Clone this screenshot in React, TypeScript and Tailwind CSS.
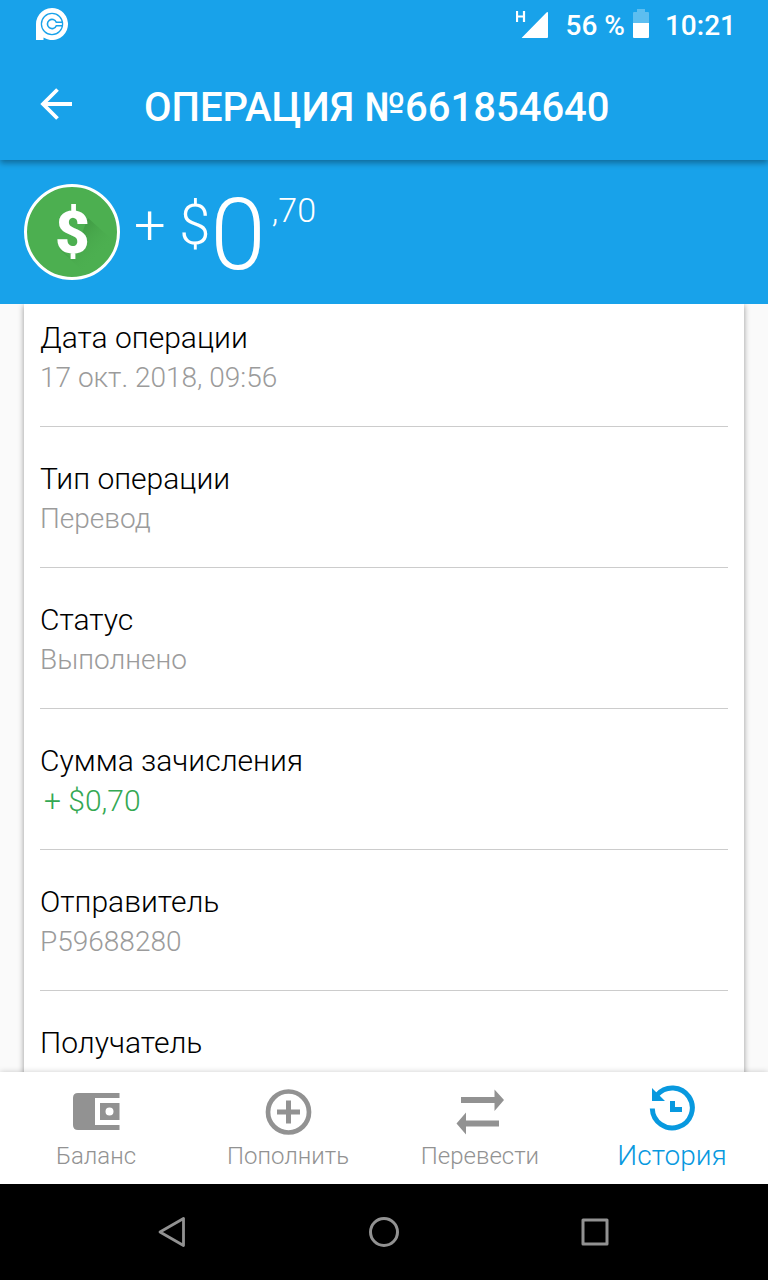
import type { ReactNode } from "react";

type Operation = { label: string; value: string; income?: boolean };

const details: Operation[] = [
  { label: "Дата операции", value: "17 окт. 2018, 09:56" },
  { label: "Тип операции", value: "Перевод" },
  { label: "Статус", value: "Выполнено" },
  { label: "Сумма зачисления", value: "+ $0,70", income: true },
  { label: "Отправитель", value: "P59688280" },
  { label: "Получатель", value: "P11998181" },
];

function StatusBar() {
  return (
    <div className="flex h-12 items-center justify-between pl-9 pr-8">
      <svg className="h-8 w-8" viewBox="0 0 32 32" fill="none" role="img" aria-label="Payeer">
        <path d="M0 32V16A16 16 0 1 1 7.5 29.6V32Z" fill="#fff" />
        <circle cx="16" cy="16" r="10.6" stroke="#18a2ea" strokeWidth="1.3" />
        <path d="M26.5 14.3H20.3A4.6 4.6 0 1 0 20.3 17.7H26.5" stroke="#18a2ea" strokeWidth="1.6" />
      </svg>
      <div className="flex items-center text-[28px] font-medium leading-8">
        <svg className="mr-[18px] h-8 w-8" viewBox="0 0 32 32" aria-hidden="true">
          <path d="M1 3v11M8 3v11M1 8.5h7" stroke="#fff" strokeWidth="2.2" fill="none" />
          <path d="M6 29.500 30.500 4.500Q32 3.500 32 5V29Q32 30 31 30H7Q5 30 6 29.500Z" fill="#fff" />
        </svg>
        <span className="pt-1">56 %</span>
        <svg className="mx-2 h-8 w-4" viewBox="0 0 16 32" aria-hidden="true">
          <path d="M4 1h8v3h3q1 0 1 1v10H0V5q0-1 1-1h3Z" fill="#fff" opacity=".3" />
          <path d="M0 15h16v14q0 1-1 1H1q-1 0-1-1Z" fill="#fff" />
        </svg>
        <span className="pl-2 pt-1">10:21</span>
      </div>
    </div>
  );
}

function DollarBadge() {
  return (
    <svg className="h-24 w-24 shrink-0" viewBox="0 0 96 96" aria-hidden="true">
      <defs>
        <linearGradient id="cast" x1="48" y1="48" x2="74" y2="74" gradientUnits="userSpaceOnUse">
          <stop offset="0" stopColor="#2f7d32" stopOpacity=".45" />
          <stop offset="1" stopColor="#4caf50" stopOpacity="0" />
        </linearGradient>
      </defs>
      <circle cx="48" cy="48" r="46.500" fill="#4caf50" stroke="#fff" strokeWidth="3" />
      <path d="M64 34 93 60A46 46 0 0 1 63 91L34 64 48 74Z" fill="url(#cast)" />
      <text x="48.500" y="69" textAnchor="middle" fontSize="60" fill="#fff" className="font-black">
        $
      </text>
    </svg>
  );
}

function Tab({ label, active, children }: { label: string; active?: boolean; children: ReactNode }) {
  return (
    <a
      href="#"
      aria-current={active ? "page" : undefined}
      className={
        active
          ? "flex flex-1 flex-col items-center pt-3 text-[28px] leading-9 text-[#0899df]"
          : "flex flex-1 flex-col items-center pt-4 text-2xl leading-9 text-[#929292]"
      }
    >
      <svg className="h-12 w-12" viewBox="0 0 48 48" fill="currentColor" aria-hidden="true">
        {children}
      </svg>
      <span className={active ? "pt-1.5" : "pt-0.5"}>{label}</span>
    </a>
  );
}

export default function App() {
  return (
    <div className="flex h-screen flex-col bg-[#fafafa] font-['Roboto',sans-serif] font-light">
      <header className="relative z-20 bg-[#18a2ea] text-white shadow-[0_3px_6px_rgba(0,0,0,0.35)]">
        <StatusBar />
        <div className="flex h-28 items-center gap-[72px] pl-10">
          <button type="button" aria-label="Назад">
            <svg className="h-8 w-8" viewBox="0 0 32 32" fill="none" stroke="#fff" strokeWidth="3.800">
              <path d="M17.500 1.500 3 16 17.500 30.500M3 16H32" />
            </svg>
          </button>
          <h1 className="pt-2 text-[40px] font-medium leading-[48px]">ОПЕРАЦИЯ №661854640</h1>
        </div>
      </header>

      <section className="flex h-36 shrink-0 items-center bg-[#18a2ea] pl-6 text-white">
        <DollarBadge />
        <p className="flex items-start pl-3.5 pt-1.5">
          <span className="text-[56px] leading-[84px]">+ $</span>
          <span className="text-[100px] leading-[104px]">0</span>
          <span className="pl-1.5 text-[34px] leading-[54px]">,70</span>
        </p>
      </section>

      <main className="min-h-0 flex-1 overflow-hidden px-6">
        <dl className="bg-white px-4 shadow-[0_1px_6px_rgba(0,0,0,0.4)]">
          {details.map((item) => (
            <div key={item.label} className="border-b border-[#cccccc] pb-7 pt-8 leading-10 first:pt-3.5">
              <dt className="text-[30px] text-black">{item.label}</dt>
              <dd className={item.income ? "pl-1 text-[30px] text-[#34a853]" : "text-[28px] text-[#9b9b9b]"}>
                {item.value}
              </dd>
            </div>
          ))}
        </dl>
      </main>

      <nav className="relative z-10 flex h-28 shrink-0 bg-white shadow-[0_0_6px_rgba(0,0,0,0.2)]">
        <Tab label="Баланс">
          <path
            fillRule="evenodd"
            d="M6 5H47.500V10H23V37H47.500V42H6Q1 42 1 37V10Q1 5 6 5ZM28 15H47.500V32H28ZM37.500 19.500a4 4 0 1 0 0 8 4 4 0 0 0 0-8Z"
          />
        </Tab>
        <Tab label="Пополнить">
          <circle cx="24.500" cy="24" r="20.500" fill="none" stroke="currentColor" strokeWidth="4.700" />
          <path d="M22 12.500h5V21.500h9v5h-9v9h-5v-9h-9v-5h9Z" />
        </Tab>
        <Tab label="Перевести">
          <path d="M5 9H38.500V1.500l9.500 10.500-9.500 11v-8H5ZM43 32.500H10V24.500L.5 35.500 10 46.500V38.500H43Z" />
        </Tab>
        <Tab label="История" active>
          <path d="M4.300 24.500A20 20 0 1 0 9 11" fill="none" stroke="currentColor" strokeWidth="5" />
          <path d="M4 4V17H17ZM22 17h5v6h7v5H22Z" />
        </Tab>
      </nav>

      <div className="flex h-24 shrink-0 items-center justify-center gap-[179px] bg-black text-[#929292]">
        <button type="button" aria-label="Назад">
          <svg className="h-8 w-8" viewBox="0 0 32 32" fill="none" stroke="currentColor" strokeWidth="2.800" strokeLinejoin="round">
            <path d="M26.500 2.500V29.500L3 16Z" />
          </svg>
        </button>
        <button type="button" aria-label="Домой">
          <svg className="h-8 w-8" viewBox="0 0 32 32" fill="none" stroke="currentColor" strokeWidth="3">
            <circle cx="16" cy="16" r="13.500" />
          </svg>
        </button>
        <button type="button" aria-label="Обзор">
          <svg className="h-8 w-8" viewBox="0 0 32 32" fill="none" stroke="currentColor" strokeWidth="3" strokeLinejoin="round">
            <rect x="4" y="4" width="24" height="24" />
          </svg>
        </button>
      </div>
    </div>
  );
}
